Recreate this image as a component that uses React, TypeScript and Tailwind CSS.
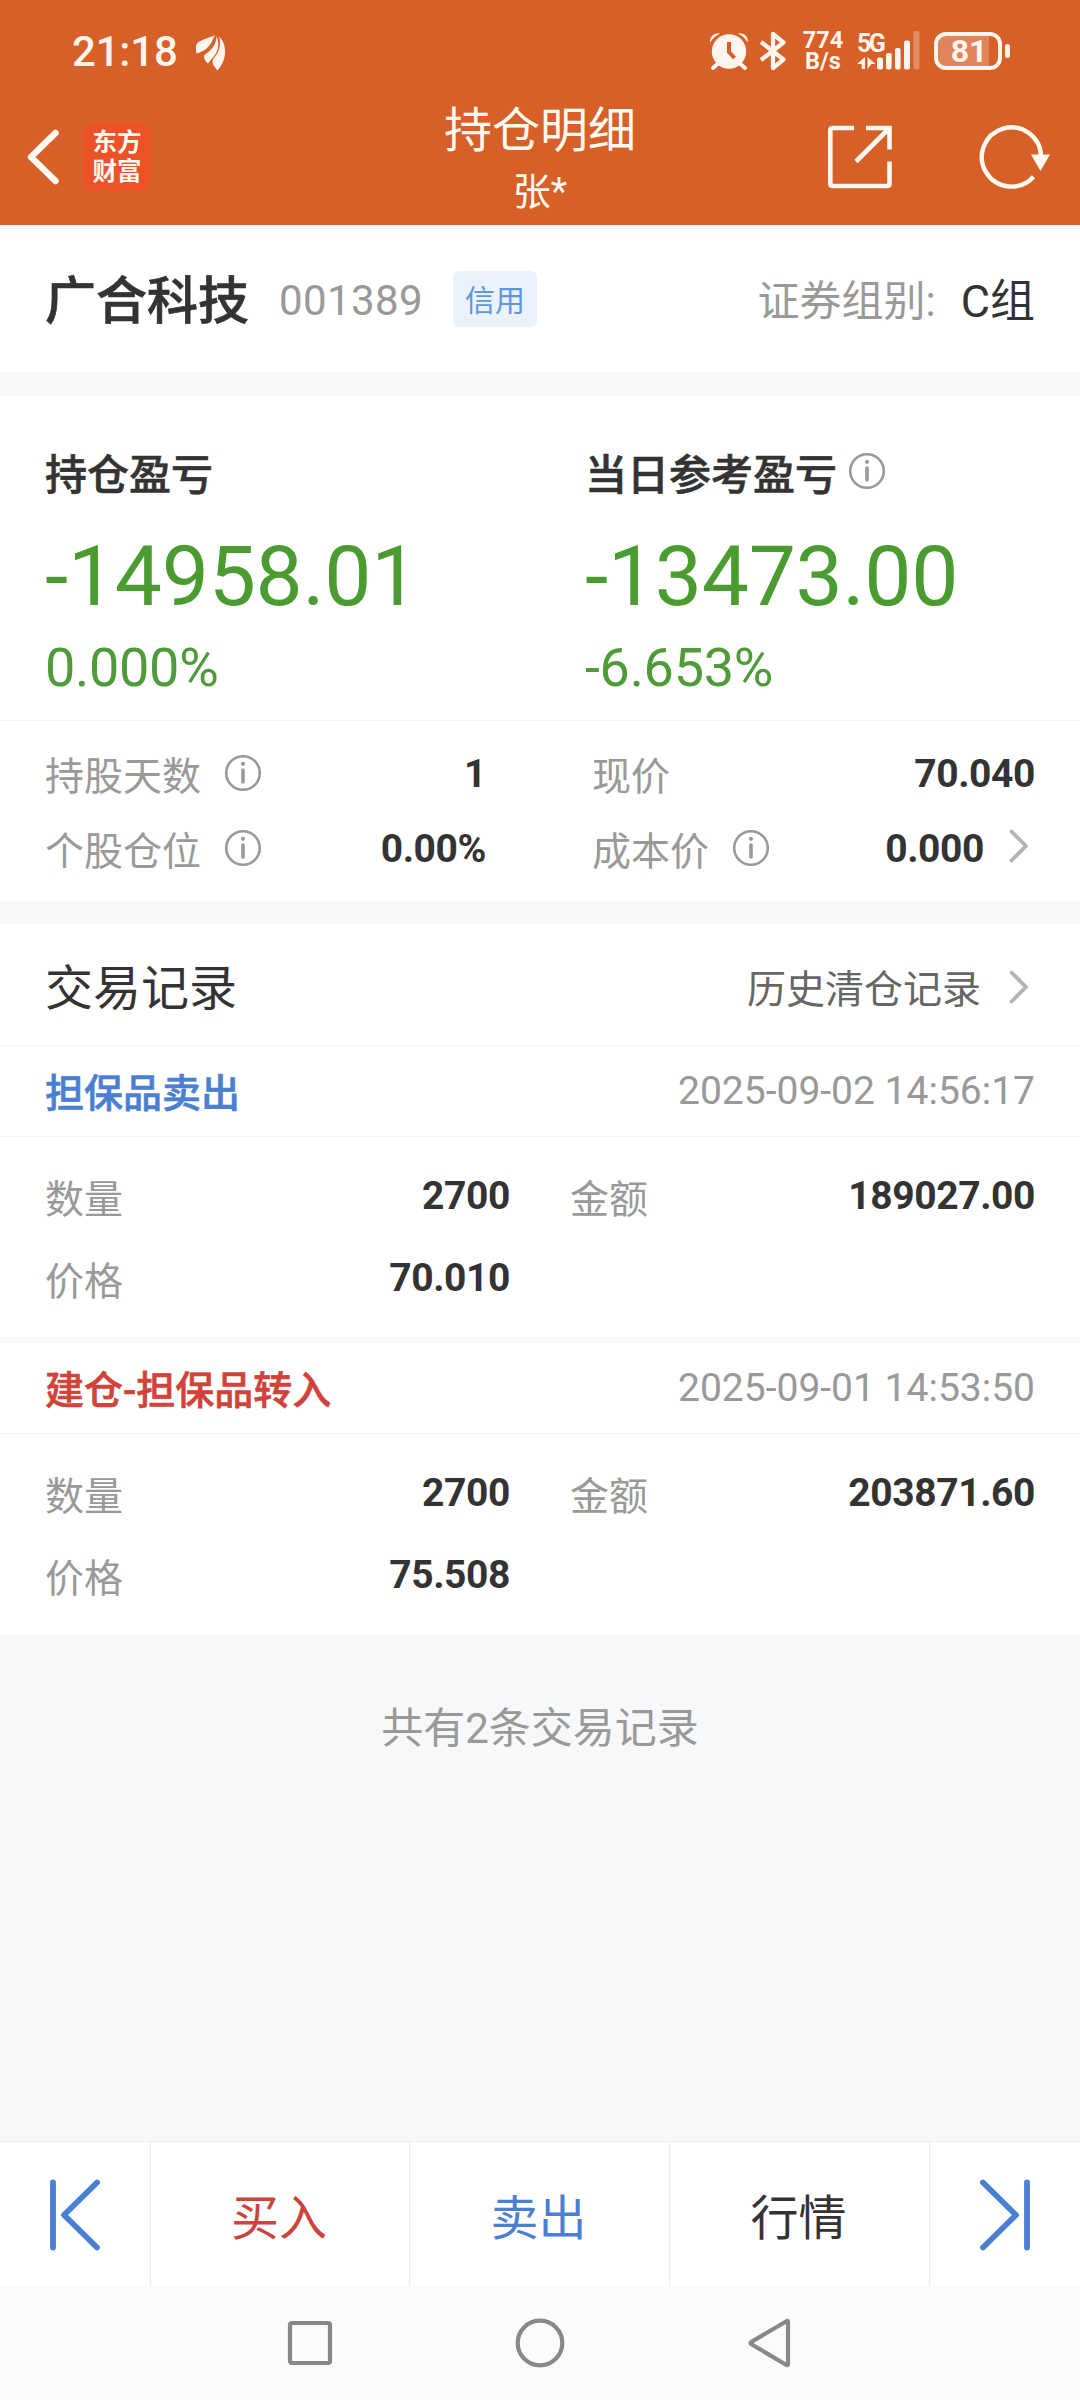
import type { ReactNode } from 'react'

// ─── Data ─────────────────────────────────────────────────────────────────────

interface TradeRecord {
  title: string
  titleClass: string
  time: string
  quantity: string
  amount: string
  price: string
}

const RECORDS: TradeRecord[] = [
  {
    title: '担保品卖出',
    titleClass: 'text-[#4a7fd4]',
    time: '2025-09-02 14:56:17',
    quantity: '2700',
    amount: '189027.00',
    price: '70.010',
  },
  {
    title: '建仓-担保品转入',
    titleClass: 'text-[#d0433a]',
    time: '2025-09-01 14:53:50',
    quantity: '2700',
    amount: '203871.60',
    price: '75.508',
  },
]

// ─── Icons ────────────────────────────────────────────────────────────────────

function InfoIcon() {
  return (
    <svg className="block h-[38px] w-[38px] shrink-0" viewBox="0 0 38 38" fill="none" stroke="#999" strokeLinecap="round">
      <circle cx="19" cy="19" r="16.8" strokeWidth="2.6" />
      <circle cx="19" cy="9.8" r="2.1" fill="#999" stroke="none" />
      <path d="M19 16v12" strokeWidth="3.6" />
    </svg>
  )
}

function ChevronIcon() {
  return (
    <svg className="block h-[34px] w-[20px] shrink-0" viewBox="0 0 20 34" fill="none" stroke="#b3b3b3" strokeWidth="3.8" strokeLinecap="round" strokeLinejoin="round">
      <path d="M2.5 2.5 17 17 2.5 31.5" />
    </svg>
  )
}

function EdgeIcon({ flip = false }: { flip?: boolean }) {
  return (
    <svg className={flip ? 'block h-[72px] w-[52px] -scale-x-100' : 'block h-[72px] w-[52px]'} viewBox="0 0 52 72" fill="none" stroke="#4a7fd4" strokeWidth="5.8" strokeLinecap="round" strokeLinejoin="round">
      <path d="M4 3.500v65M48 3.500 15 36l33 32.500" />
    </svg>
  )
}

// ─── Status bar ───────────────────────────────────────────────────────────────

function StatusBar() {
  return (
    <div className="flex h-[102px] items-center pl-[72px] text-[#fff4ee]">
      <span className="mt-[2px] w-[122px] text-[42px] leading-[50px] font-medium tracking-[-0.2px]">21:18</span>
      <svg className="mt-[4px] block h-[36px] w-[32px]" viewBox="0 0 32 36" fill="#fff4ee">
        <path d="M21 0C17 2.500 8 4 3.500 8 1.500 10 1.500 14 2.500 18.500 7 17 12 15 15 11 18 7 19 4 21 0Z" />
        <path d="M22.500 1c0 6-2.500 10.500-6.500 14.500-2 2-4.500 3.500-6 5 0 3.500 1 5.500 4 8 3.500-5 7-7.500 9-12 2-5 1.500-11-.5-15.500Z" />
        <path d="M25 1.500c2 6 1 12.500-2 17.500-2 3-4.500 4.500-4.500 7.500 0 3 2 5.500 5 9C27.500 30.500 31 25 31 17c0-7-2-12-6-15.500Z" />
      </svg>

      <svg className="ml-[483px] block h-[40px] w-[40px]" viewBox="0 0 40 40" fill="none">
        <circle cx="20" cy="20.500" r="17.200" fill="#fff4ee" />
        <path d="M8.500 33l-4.500 4M31.500 33l4.500 4" stroke="#fff4ee" strokeWidth="4" strokeLinecap="round" />
        <path d="M1.200 11.500C.5 6 5 1.500 11 2.500 7 4.500 3.500 7.500 1.200 11.500ZM38.800 11.500C39.500 6 35 1.500 29 2.500 33 4.500 36.500 7.500 38.800 11.500Z" fill="#fff4ee" />
        <path d="M20 11v10l5.500 6" stroke="#d75f28" strokeWidth="4" />
      </svg>
      <svg className="ml-[11px] block h-[40px] w-[27px]" viewBox="0 0 27 40" fill="none" stroke="#fff4ee" strokeWidth="4.300" strokeLinejoin="round">
        <path d="M1 11l22.500 17.500L13 37V3l10.500 8.500L1 29" />
      </svg>
      <div className="ml-[13px] flex w-[46px] flex-col items-center text-[23.500px] leading-[21px] font-bold">
        <span>774</span>
        <span>B/s</span>
      </div>
      <div className="ml-[11px] flex h-[44px] items-end">
        <div className="flex w-[28px] flex-col">
          <span className="text-[25px] leading-[25px] font-bold tracking-[-2.500px]">5G</span>
          <svg className="mb-[3px] block h-[14px] w-[28px]" viewBox="0 0 28 14" fill="#fff4ee">
            <path d="M8 1v12H4.700V8H0zM10.500 1l8 7h-4l-4 5z" />
            <rect x="20" y="1.500" width="6" height="12" rx="2" />
          </svg>
        </div>
        <svg className="mb-[3px] block h-[40px] w-[36px]" viewBox="0 0 36 40" fill="#fff4ee">
          <rect x="1" y="23" width="5.600" height="16.500" rx="2" />
          <rect x="10" y="18" width="5.600" height="21.500" rx="2" />
          <rect x="19" y="10.500" width="6" height="29" rx="2" />
          <rect x="28.500" y="1" width="6" height="38.500" rx="2" opacity="0.3" />
        </svg>
      </div>
      <div className="ml-[13px] flex h-[38px] w-[68px] items-center rounded-[12px] border-[4px] border-[#fff4ee] bg-linear-to-r from-[#e08559] from-85% to-[#d75f28] to-85%">
        <span className="w-[60px] pt-[1px] pl-[2px] text-center text-[32px] leading-[33px] font-bold">81</span>
      </div>
      <div className="ml-[3px] h-[14px] w-[5px] rounded-full bg-[#fff4ee]" />
    </div>
  )
}

// ─── Title bar ────────────────────────────────────────────────────────────────

function TitleBar() {
  return (
    <div className="grid h-[123px] grid-cols-3 text-[#fffaf2]">
      <div className="flex items-center pb-[13px] pl-[27px]">
        <svg className="block h-[56px] w-[32px]" viewBox="0 0 32 56" fill="none" stroke="currentColor" strokeWidth="6.500" strokeLinecap="round" strokeLinejoin="round">
          <path d="M28.500 4 4 28l24.500 24" />
        </svg>
        <div className="ml-[24px] flex h-[68px] w-[68px] flex-col items-center justify-center rounded-[12px] bg-[#ec5128] text-[24.500px] leading-[29px] font-bold">
          <span>东方</span>
          <span>财富</span>
        </div>
      </div>
      <div className="flex flex-col items-center">
        <h1 className="-mt-[4px] text-[48px] leading-[66px]">持仓明细</h1>
        <p className="text-[38px] leading-[56px]">张*</p>
      </div>
      <div className="flex items-center justify-end gap-[86px] pr-[29px] pb-[13px]">
        <svg className="block h-[64px] w-[66px]" viewBox="0 0 66 64" fill="none" stroke="currentColor" strokeWidth="4.600">
          <path d="M27 3H6Q3.300 3 3.300 5.500V58.500Q3.300 61 6 61H60Q62.500 61 62.500 58.500V36.500M39 3H62.500V24.500M62 3.500 29 36.500" />
        </svg>
        <svg className="block h-[66px] w-[72px]" viewBox="0 0 72 66" fill="none" stroke="currentColor" strokeWidth="4.400">
          <path d="M54.500 52.700A29.600 29.600 0 1 1 62 33" />
          <path d="M52 30.500h19L61.500 47z" fill="currentColor" stroke="none" />
        </svg>
      </div>
    </div>
  )
}

// ─── Holding sections ─────────────────────────────────────────────────────────

function StockHeader() {
  return (
    <section className="flex h-[147px] items-center bg-white px-[45px] pt-[6px]">
      <h2 className="text-[51px] leading-[76px] font-medium [-webkit-text-stroke:0.7px_#333]">广合科技</h2>
      <span className="-mt-[2px] ml-[30px] text-[42px] leading-[60px] tracking-[0.400px] text-[#999]">001389</span>
      <span className="-mt-[6px] ml-[30px] flex h-[56px] w-[84px] items-center justify-center rounded-[6px] bg-[#eaf2fc] pt-[4px] text-[30px] leading-[44px] text-[#5f96df]">信用</span>
      <span className="ml-auto text-[42px] leading-[60px] text-[#999]">证券组别:</span>
      <span className="ml-[25px] text-[45px] leading-[60px]">C组</span>
    </section>
  )
}

function ProfitBlock({ label, value, percent, info }: { label: string; value: string; percent: string; info?: boolean }) {
  return (
    <div>
      <div className="flex h-[60px] items-center gap-[11px] text-[42px] font-medium">
        <span className="leading-[60px] [-webkit-text-stroke:0.6px_#333]">{label}</span>
        {info && <div className="-mt-[10px]"><InfoIcon /></div>}
      </div>
      <div className="mt-[22px] text-[84px] leading-[98px] tracking-[-0.300px] text-[#4a9c30]">{value}</div>
      <div className="mt-[10px] text-[54px] leading-[64px] tracking-[-0.300px] text-[#4f9a39]">{percent}</div>
    </div>
  )
}

function Stat({ label, value, info, arrow, className }: { label: string; value: string; info?: boolean; arrow?: boolean; className: string }) {
  return (
    <div className={`flex h-[75px] items-center ${className}`}>
      <span className="mt-[2px] text-[39px] leading-[56px] text-[#999]">{label}</span>
      {info && <div className="-mt-[5px] ml-[23px]"><InfoIcon /></div>}
      <span className="-mt-[4px] ml-auto text-[39px] leading-[46px] font-bold tracking-[-0.400px]">{value}</span>
      {arrow && <div className="-mt-[10px] mr-[6px] ml-[25px]"><ChevronIcon /></div>}
    </div>
  )
}

function ProfitSection() {
  return (
    <section className="mt-[24px] h-[505px] bg-white">
      <div className="grid h-[325px] grid-cols-2 border-b border-[#f3f3f3] pt-[50px]">
        <div className="pl-[45px]">
          <ProfitBlock label="持仓盈亏" value="-14958.01" percent="0.000%" />
        </div>
        <div className="pl-[45px]">
          <ProfitBlock label="当日参考盈亏" value="-13473.00" percent="-6.653%" info />
        </div>
      </div>
      <div className="grid grid-cols-2 pt-[17px]">
        <Stat label="持股天数" value="1" info className="pr-[54px] pl-[45px]" />
        <Stat label="现价" value="70.040" className="pr-[45px] pl-[52px]" />
        <Stat label="个股仓位" value="0.00%" info className="pr-[54px] pl-[45px]" />
        <Stat label="成本价" value="0.000" info arrow className="pr-[45px] pl-[52px]" />
      </div>
    </section>
  )
}

// ─── Trade records ────────────────────────────────────────────────────────────

function Field({ label, value }: { label: string; value: string }) {
  return (
    <div className="flex h-[82px] items-center justify-between">
      <span className="mt-[3px] text-[39px] leading-[56px] text-[#999]">{label}</span>
      <span className="-mt-[4px] text-[39px] leading-[46px] font-bold tracking-[-0.400px]">{value}</span>
    </div>
  )
}

function RecordCard({ record }: { record: TradeRecord }) {
  return (
    <article className="bg-white">
      <div className="flex h-[91px] items-center justify-between border-b border-[#f5f5f5] px-[45px]">
        <h3 className={`mt-[6px] text-[39px] leading-[56px] font-medium [-webkit-text-stroke:0.6px_currentColor] ${record.titleClass}`}>{record.title}</h3>
        <time className="text-[39px] leading-[56px] text-[#999]">{record.time}</time>
      </div>
      <div className="grid h-[200px] grid-cols-[465px_465px] content-start gap-x-[60px] pt-[20px] pl-[45px]">
        <Field label="数量" value={record.quantity} />
        <Field label="金额" value={record.amount} />
        <Field label="价格" value={record.price} />
      </div>
    </article>
  )
}

function RecordsSection() {
  return (
    <section className="mt-[23px]">
      <div className="flex h-[122px] items-center border-b border-[#f5f5f5] bg-white px-[45px]">
        <h2 className="mt-[9px] text-[48px] leading-[70px]">交易记录</h2>
        <span className="mt-[10px] ml-auto text-[39px] leading-[56px] text-[#666]">历史清仓记录</span>
        <div className="mt-[4px] mr-[6px] ml-[28px]"><ChevronIcon /></div>
      </div>
      <div className="flex flex-col gap-[6px]">
        {RECORDS.map(record => <RecordCard key={record.time} record={record} />)}
      </div>
    </section>
  )
}

// ─── Bottom bars ──────────────────────────────────────────────────────────────

function ActionCell({ children, className }: { children: ReactNode; className: string }) {
  return (
    <button type="button" className={`flex items-center justify-center border-l border-[#ececec] pt-[9px] pr-[2px] text-[48px] leading-[68px] ${className}`}>
      {children}
    </button>
  )
}

function ActionBar() {
  return (
    <div className="grid h-[145px] grid-cols-[150px_259px_260px_260px_151px] border-t border-[#ebedef] bg-white">
      <div className="flex items-center justify-center pt-[1px]"><EdgeIcon /></div>
      <ActionCell className="text-[#cb433b]">买入</ActionCell>
      <ActionCell className="text-[#4a7fd4]">卖出</ActionCell>
      <ActionCell className="text-[#333]">行情</ActionCell>
      <div className="flex items-center justify-center border-l border-[#ececec] pt-[1px]"><EdgeIcon flip /></div>
    </div>
  )
}

function SystemNav() {
  return (
    <nav className="flex h-[114px] items-center justify-center gap-[182px] bg-[#fbfbfb]">
      <svg className="block h-[50px] w-[46px]" viewBox="0 0 46 50" fill="none" stroke="#888" strokeWidth="4.200">
        <rect x="3" y="5" width="40" height="40" rx="2" />
      </svg>
      <svg className="block h-[50px] w-[50px]" viewBox="0 0 50 50" fill="none" stroke="#888" strokeWidth="4.200">
        <circle cx="25" cy="25" r="22.300" />
      </svg>
      <svg className="block h-[50px] w-[46px]" viewBox="0 0 46 50" fill="none" stroke="#888" strokeWidth="4.200" strokeLinejoin="round">
        <path d="M39.500 3.200Q41 2 41 4V46Q41 48 39 46.800L4.500 26.200Q2.500 25 4.500 23.800Z" />
      </svg>
    </nav>
  )
}

// ─── Page ─────────────────────────────────────────────────────────────────────

export default function App() {
  return (
    <div className="flex h-[2400px] w-[1080px] flex-col overflow-hidden bg-[#f7f8fa] font-[Roboto,'Noto_Sans_CJK_SC',sans-serif] text-[#333]">
      <header className="bg-[#d75f28]">
        <StatusBar />
        <TitleBar />
      </header>
      <main className="flex-1">
        <StockHeader />
        <ProfitSection />
        <RecordsSection />
        <p className="mt-[65px] text-center text-[42px] leading-[60px] text-[#999]">共有2条交易记录</p>
      </main>
      <ActionBar />
      <SystemNav />
    </div>
  )
}
